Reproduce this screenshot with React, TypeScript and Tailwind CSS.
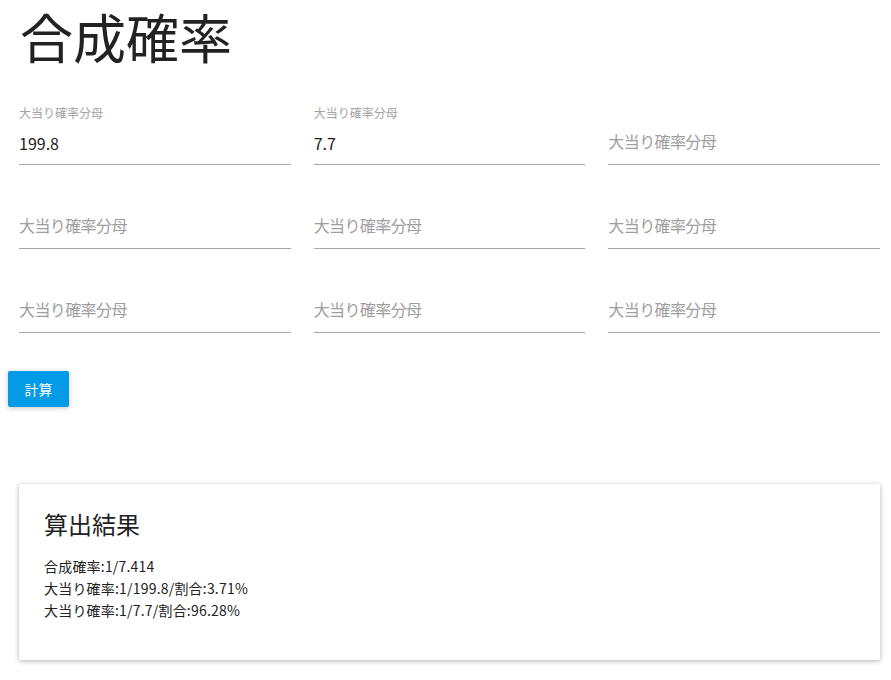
import React from "react";

const font = { fontFamily: '"Noto Sans CJK JP", "Noto Sans", sans-serif' };

function Field({ value }: { value?: string }) {
  return (
    <div className="h-[72px] flex flex-col">
      <div className="h-[30px] pt-[5px] text-[12px] leading-[16px] text-[#a3a3a3]">
        {value ? "大当り確率分母" : ""}
      </div>
      <div
        className={
          "h-[26px] text-[16px] " +
          (value
            ? "leading-[26px] text-[#222222]"
            : "leading-[22px] tracking-[-0.6px] text-[#9e9e9e]")
        }
      >
        {value ?? "大当り確率分母"}
      </div>
      <div className="mt-[8px] border-b border-[#a6a6a6]" />
    </div>
  );
}

export default function App() {
  return (
    <div className="bg-white w-[891px] h-[680px] pl-[8px]" style={font}>
      <h1 className="ml-[12px] mb-[28px] text-[53px] leading-[72px] text-[#222222] font-normal">
        合成確率
      </h1>
      <div className="ml-[11px] w-[861px] grid grid-cols-3 gap-x-[23px] gap-y-[12px]">
        <Field value="199.8" />
        <Field value="7.7" />
        <Field />
        <Field />
        <Field />
        <Field />
        <Field />
        <Field />
        <Field />
      </div>
      <button className="mt-[31px] w-[61px] h-[36px] bg-[#039be5] text-white text-[14px] rounded-[2px] shadow-[0_1px_6px_rgba(0,0,0,0.12),0_1px_4px_rgba(0,0,0,0.12)]">
        計算
      </button>
      <div className="mt-[77px] ml-[11px] w-[861px] h-[176px] bg-white rounded-[2px] shadow-[0_1px_6px_rgba(0,0,0,0.12),0_1px_4px_rgba(0,0,0,0.2)] px-[25px] pt-[24px]">
        <div className="text-[24px] leading-[32px] text-[#222222]">算出結果</div>
        <div className="mt-[15px] text-[14px] leading-[22px] text-[#222222] tracking-[0.2px]">
          <div>合成確率:1/7.414</div>
          <div>大当り確率:1/199.8/割合:3.71%</div>
          <div>大当り確率:1/7.7/割合:96.28%</div>
        </div>
      </div>
    </div>
  );
}
